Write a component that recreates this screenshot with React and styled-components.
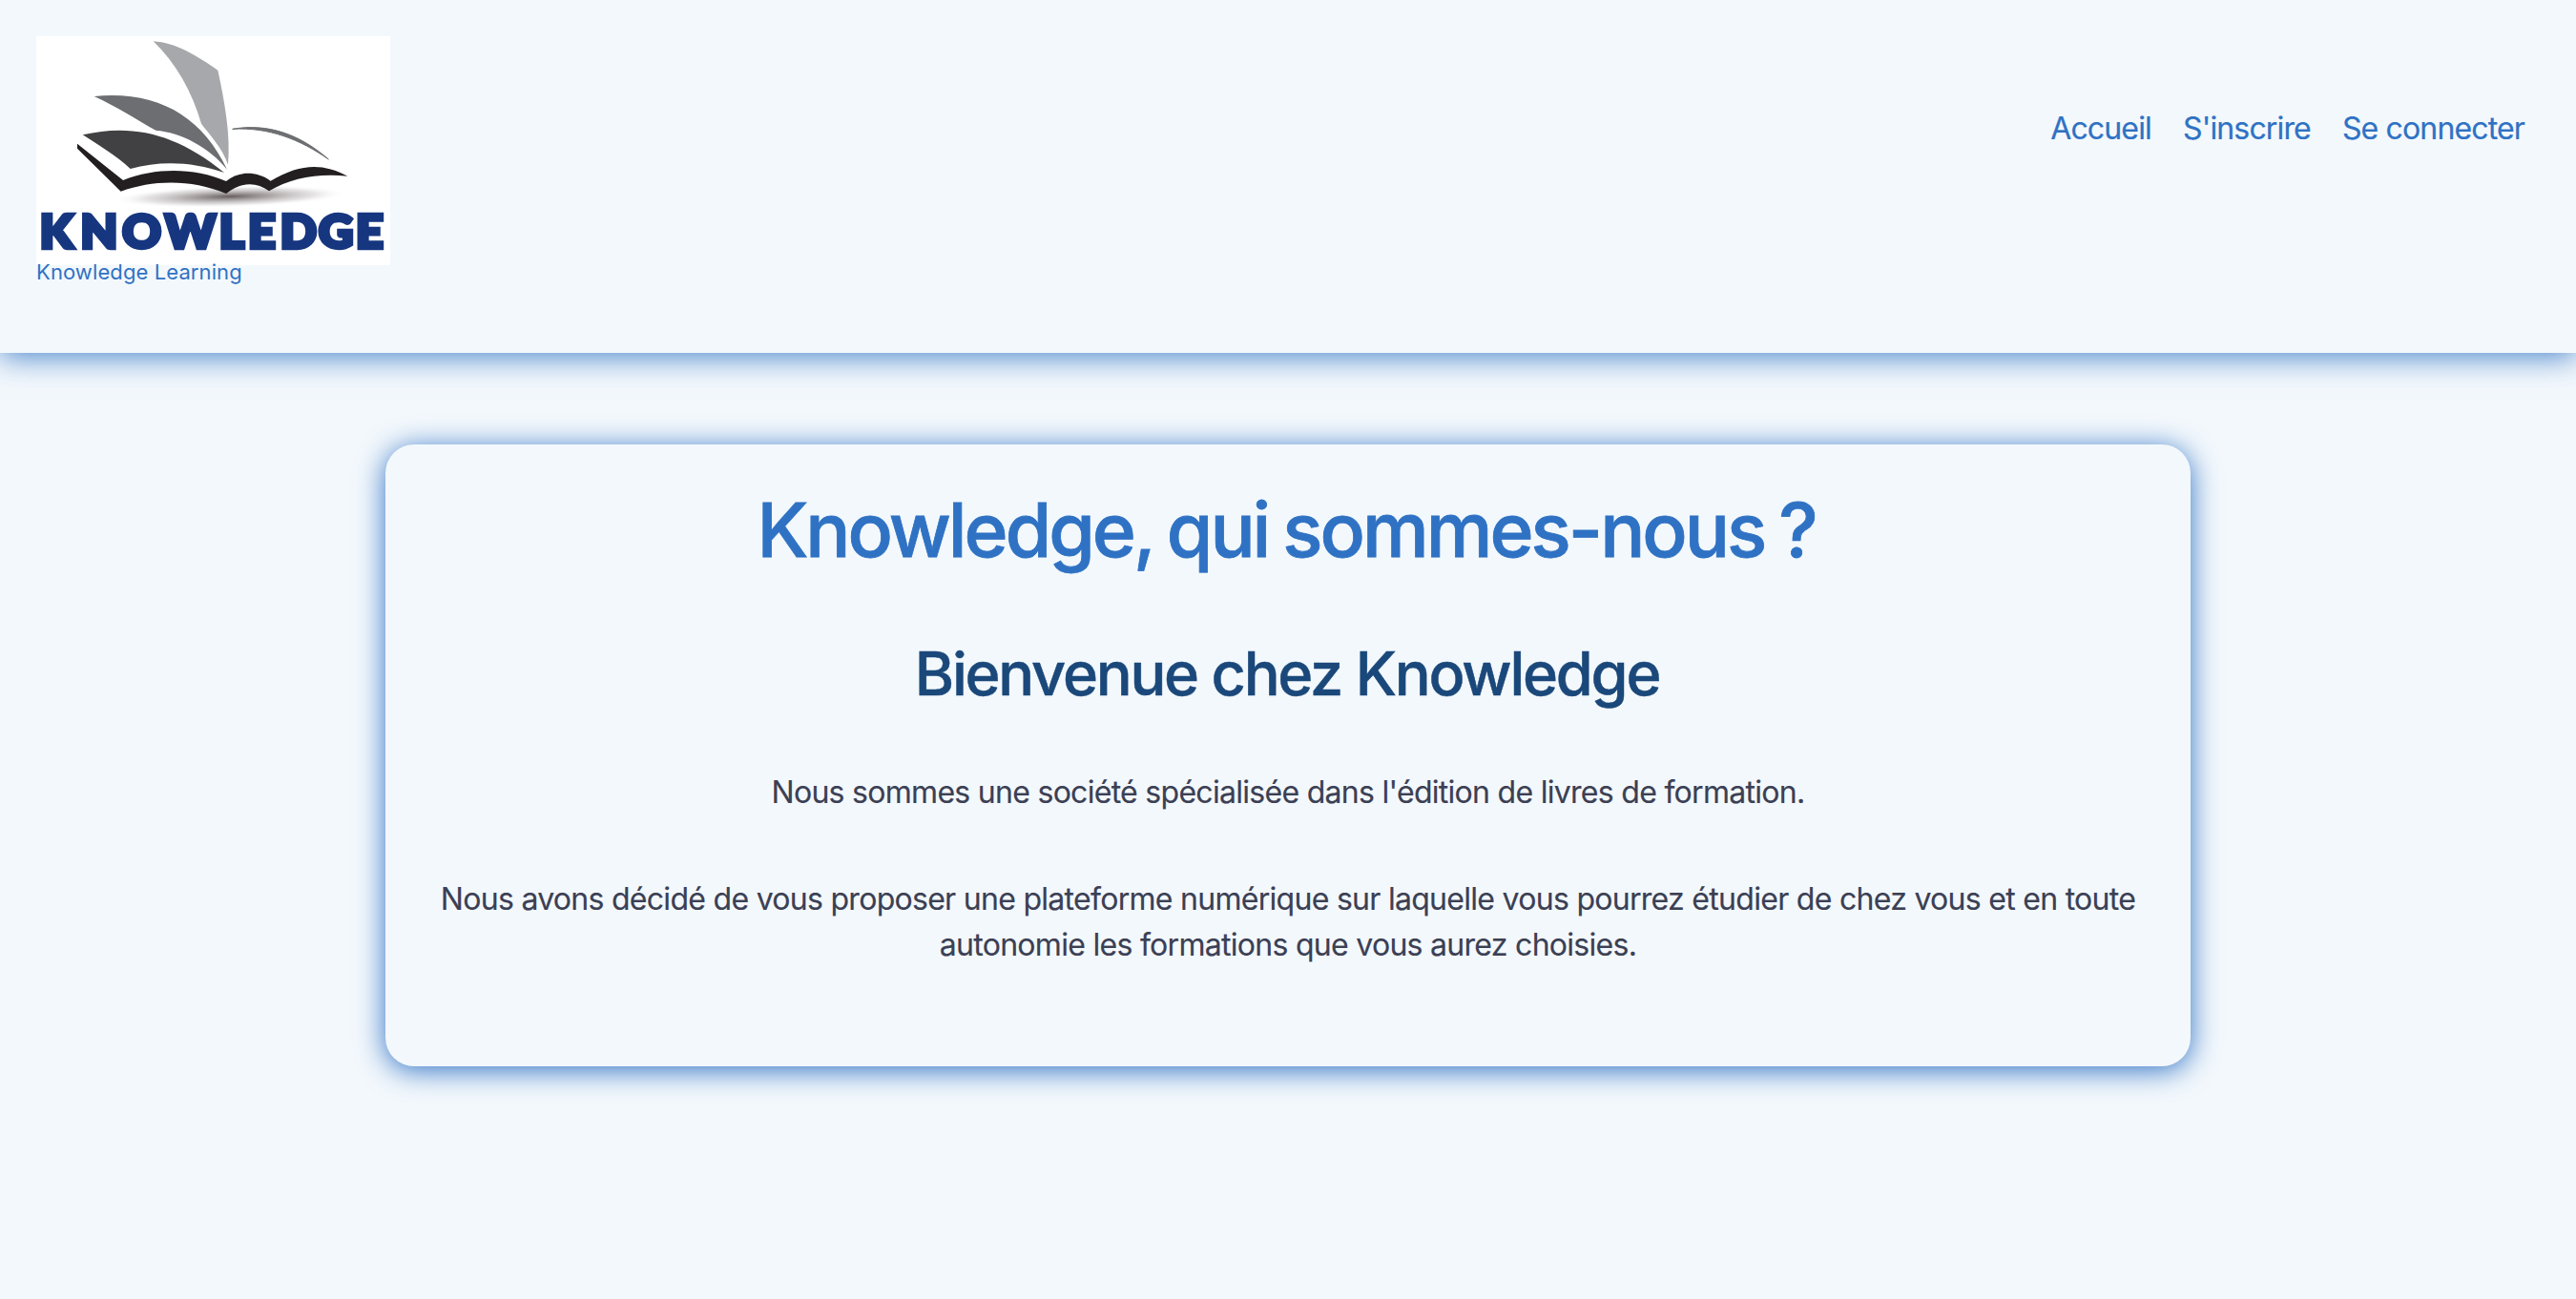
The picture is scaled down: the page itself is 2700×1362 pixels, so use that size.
import React from "react";
import styled, { createGlobalStyle } from "styled-components";

const BLUE = "#2f72c4";
const PAGE = "#f3f8fc";

const GlobalStyle = createGlobalStyle`
  *, *::before, *::after { box-sizing: border-box; }
  html { background: ${PAGE}; }
  body {
    margin: 0;
    background: ${PAGE};
    color: #3b4054;
    font-family: Inter, "Liberation Sans", sans-serif;
    font-size: 32px;
    line-height: 48px;
    -webkit-font-smoothing: antialiased;
  }
`;

const Page = styled.div`
  display: flex;
  flex-direction: column;
  min-height: 100vh;
`;

const Header = styled.header`
  display: flex;
  flex: none;
  justify-content: space-between;
  align-items: flex-start;
  height: 370px;
  padding: 38px 54px 0 38px;
  box-shadow: 0 4px 30px rgba(47, 114, 196, 0.86);
`;

const Brand = styled.a`
  display: flex;
  flex-direction: column;
  color: ${BLUE};
  text-decoration: none;
`;

const BrandName = styled.span`
  margin-top: -7px;
  font-size: 22px;
  line-height: 28px;
  letter-spacing: 0.1px;
`;

const Nav = styled.nav`
  display: flex;
  gap: 33px;
  padding-top: 73px;
`;

const NavLink = styled.a`
  color: ${BLUE};
  text-decoration: none;
  letter-spacing: -0.85px;
  -webkit-text-stroke: 0.2px currentColor;
`;

const Card = styled.main`
  display: flex;
  flex-direction: column;
  align-items: center;
  width: 1892px;
  height: 652px;
  margin: 96px auto 0;
  padding: 40px 48px 0;
  border-radius: 30px;
  text-align: center;
  box-shadow: 0 4px 30px ${BLUE};
`;

const Title = styled.h1`
  margin: 0;
  padding-right: 4px;
  color: ${BLUE};
  font-size: 78.5px;
  font-weight: 500;
  line-height: 100px;
  letter-spacing: -3px;
  word-spacing: -3px;
  -webkit-text-stroke: 0.8px currentColor;
`;

const Subtitle = styled.h2`
  margin: 60px 0 0;
  padding-right: 2px;
  color: #1b487a;
  font-size: 63px;
  font-weight: 500;
  line-height: 80px;
  letter-spacing: -2.2px;
  -webkit-text-stroke: 0.5px currentColor;
`;

const Paragraph = styled.p`
  margin: ${(p) => p.$top}px 0 0;
  letter-spacing: -0.71px;
  -webkit-text-stroke: 0.15px currentColor;
`;

function Logo() {
  return (
    <svg width="371" height="240" viewBox="0 0 1113 720" role="img" aria-label="Knowledge">
      <defs>
        <radialGradient id="ground">
          <stop offset="0" stopColor="#5f5657" stopOpacity="0.95" />
          <stop offset="0.35" stopColor="#8a8384" stopOpacity="0.7" />
          <stop offset="0.7" stopColor="#b5b0b1" stopOpacity="0.38" />
          <stop offset="1" stopColor="#ffffff" stopOpacity="0" />
        </radialGradient>
      </defs>
      <rect width="1113" height="720" fill="#fff" />
      <ellipse cx="610" cy="504" rx="370" ry="34" fill="url(#ground)" transform="rotate(-1.5 610 504)" />
      <path d="M368 16C440 20 505 62 571 107C592 205 612 310 603 404C585 350 545 310 519 275C490 175 440 85 368 16Z" fill="#a7a8ab" />
      <path d="M182 189C380 170 520 250 600 419C545 350 455 302 376 296C320 266 250 219 182 189Z" fill="#6d6e71" />
      <path d="M146 310C300 274 440 305 591 429C490 394 390 391 296 417C250 375 200 345 146 310Z" fill="#414042" />
      <path d="M129 338L273 453C380 411 500 415 597 456C635 425 690 422 737 455C830 400 900 398 979 440C890 430 800 445 732 487C690 455 640 460 597 495C490 450 370 450 266 488L129 353Z" fill="#231f20" />
      <path d="M617 292C730 272 830 310 919 387C830 325 730 285 617 292Z" fill="#6d6e71" stroke="#6d6e71" strokeWidth="3" />
      <text
        transform="scale(1.05 1)"
        x="10.5 133 258 386 548 634 731 846 957"
        y="665"
        fill="#16367f"
        stroke="#16367f"
        strokeWidth="13"
        fontFamily='Lato, "Open Sans", sans-serif'
        fontSize="143"
        fontWeight="900"
      >
        KNOWLEDGE
      </text>
    </svg>
  );
}

export default function App() {
  return (
    <Page>
      <GlobalStyle />
      <Header>
        <Brand href="#">
          <Logo />
          <BrandName>Knowledge Learning</BrandName>
        </Brand>
        <Nav>
          <NavLink href="#">Accueil</NavLink>
          <NavLink href="#">S'inscrire</NavLink>
          <NavLink href="#">Se connecter</NavLink>
        </Nav>
      </Header>
      <Card>
        <Title>Knowledge, qui sommes-nous ?</Title>
        <Subtitle>Bienvenue chez Knowledge</Subtitle>
        <Paragraph $top={61}>Nous sommes une société spécialisée dans l'édition de livres de formation.</Paragraph>
        <Paragraph $top={64}>
          Nous avons décidé de vous proposer une plateforme numérique sur laquelle vous pourrez étudier de chez vous et en toute
          autonomie les formations que vous aurez choisies.
        </Paragraph>
      </Card>
    </Page>
  );
}
